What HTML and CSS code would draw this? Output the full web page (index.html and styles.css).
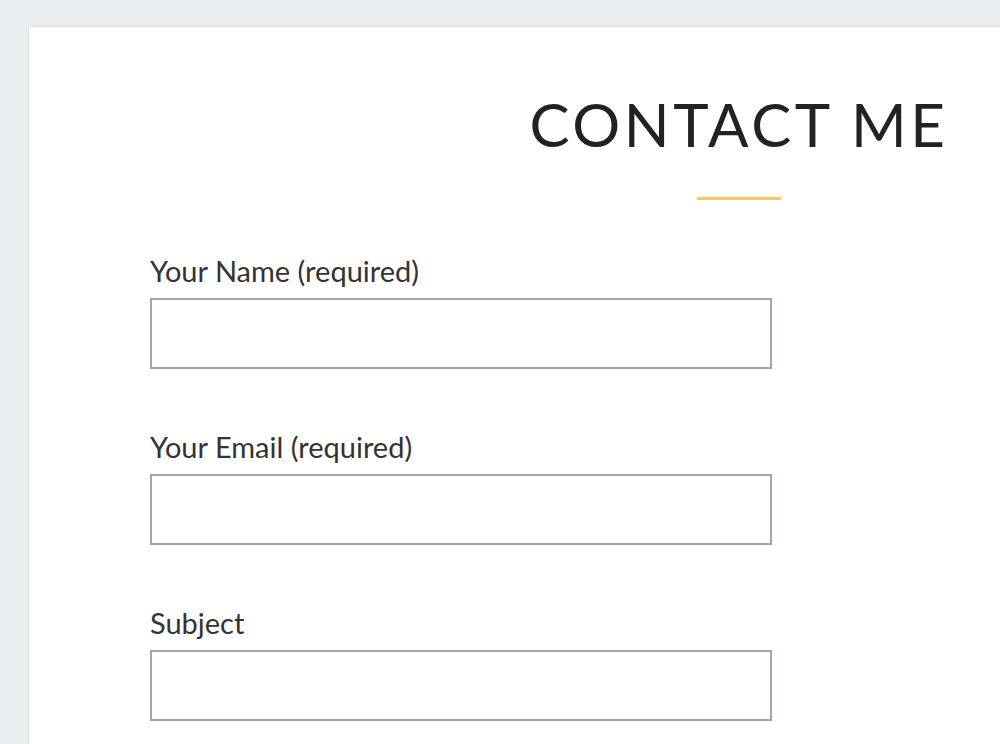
FILE: index.html
```html
<!DOCTYPE html>
<html lang="en">
<head>
    <meta charset="UTF-8">
    <meta name="viewport" content="width=device-width, initial-scale=1.0">
    <title>Contact Me</title>
    <link rel="stylesheet" href="styles.css">
</head>
<body>
    <div class="card">
        <div class="page-header">
            <h1>CONTACT ME</h1>
            <div class="divider"></div>
        </div>
        <form class="contact-form">
            <div class="field">
                <label for="your-name">Your Name (required)</label>
                <input type="text" id="your-name">
            </div>
            <div class="field">
                <label for="your-email">Your Email (required)</label>
                <input type="email" id="your-email">
            </div>
            <div class="field">
                <label for="your-subject">Subject</label>
                <input type="text" id="your-subject">
            </div>
        </form>
    </div>
</body>
</html>
```

FILE: styles.css
```css
html, body {
    height: 100%;
}
body {
    margin: 0;
    padding: 27px 0 0 29px;
    background-color: #e9edf0;
    overflow: hidden;
    font-family: Lato, "Liberation Sans", sans-serif;
    box-sizing: border-box;
}
.card {
    width: 1420px;
    min-height: 900px;
    background-color: #fff;
    box-shadow: 0 0 2px rgba(0,0,0,0.12);
    padding: 61px 121px 0 121px;
    box-sizing: border-box;
}
.page-header {
    text-align: center;
}
.page-header h1 {
    margin: 0;
    font-size: 60px;
    font-weight: 400;
    letter-spacing: 3.6px;
    line-height: 72px;
    color: #222;
}
.divider {
    width: 84px;
    height: 3px;
    margin: 37px auto 0;
    background-color: #fdc765;
}
.contact-form {
    margin-top: 53px;
}
.field {
    margin-bottom: 60px;
}
.field label {
    display: block;
    font-size: 29px;
    line-height: 36px;
    color: #333;
    margin-bottom: 9px;
}
.field input {
    display: block;
    width: 622px;
    height: 71px;
    margin: 0;
    border: 2px solid #aaa1a5;
    box-sizing: border-box;
    background: #fff;
    font-size: 22px;
    padding: 0 14px;
}
```
